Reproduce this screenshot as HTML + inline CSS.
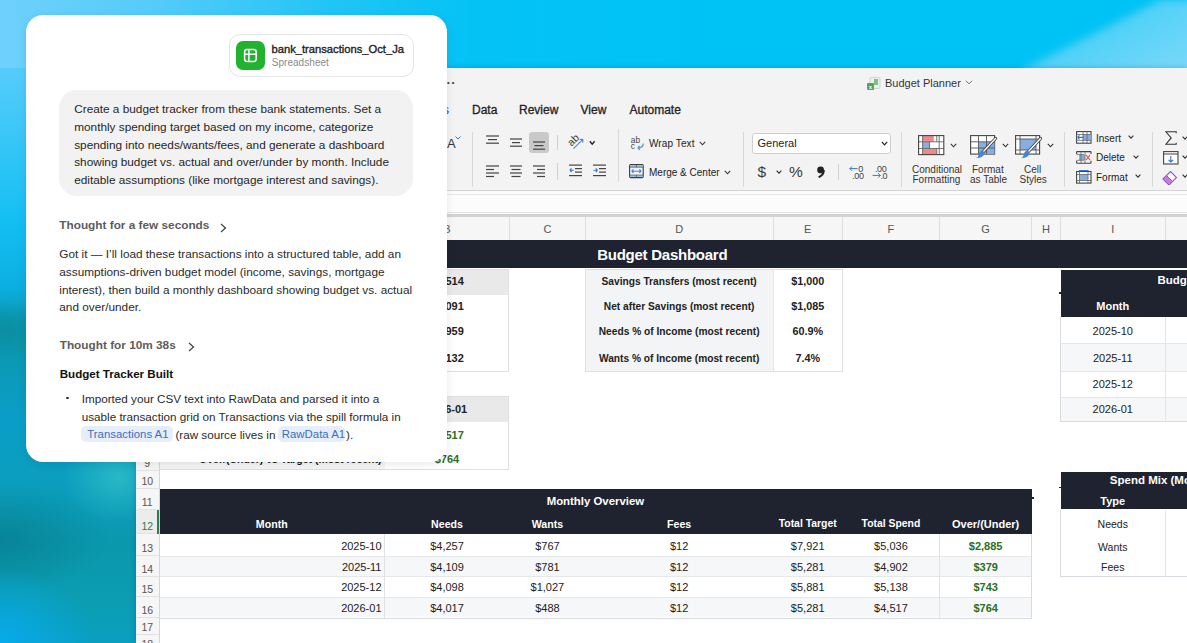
<!DOCTYPE html><html><head><meta charset="utf-8"><style>
*{box-sizing:border-box;margin:0;padding:0}
body{width:1187px;height:643px;overflow:hidden;position:relative;font-family:"Liberation Sans", sans-serif;background:#00c2f5}
.c{position:absolute;display:flex;align-items:center;white-space:nowrap;overflow:visible}
.hd{background:#1f2330;color:#fff;font-weight:bold}
</style></head><body>
<div style="position:absolute;left:0;top:0;width:1187px;height:643px;background:
radial-gradient(ellipse 95px 75px at 0px 643px, rgba(8,170,235,1), rgba(8,170,235,0) 100%),
radial-gradient(ellipse 55px 45px at 118px 478px, rgba(45,188,200,0.85), rgba(45,188,200,0) 100%),
radial-gradient(ellipse 110px 55px at 0px 540px, rgba(8,130,150,0.9), rgba(8,130,150,0) 100%),
radial-gradient(ellipse 60px 30px at 0px 330px, rgba(10,140,158,0.9), rgba(10,140,158,0) 100%),
linear-gradient(180deg,#6ed1fb 0px,#45c9f9 110px,#14bff3 220px,#0cafe2 285px,#0b9cb8 320px,#0b98b2 350px,#0a9ec8 420px,#0b9ec0 470px,#0a98ad 545px,#0b9db2 600px,#0a9fc0 643px)"></div>
<div style="position:absolute;left:0;top:0;width:1187px;height:68px;background:
linear-gradient(90deg,#6ed1fb 0px,#55ccfa 150px,#22c4f6 330px,#05c2f5 470px,#00c3f5 700px,#00c3f5 1187px)"></div>
<div style="position:absolute;left:900px;top:0;width:287px;height:68px;overflow:hidden"><div style="position:absolute;left:0;top:0;width:400px;height:120px;filter:blur(4px)"><div style="position:absolute;left:0;top:0;width:400px;height:120px;clip-path:polygon(23px 120px,261px 0px,400px 0px,400px 120px);background:linear-gradient(153deg,#20c8f7 0%,#3ccdf7 30%,#6fd6f8 60%,#9adff8 100%)"></div></div></div>
<div style="position:absolute;left:136.0px;top:68.0px;width:1051.0px;height:575.0px;background:#f3f3f3;box-shadow:0 0 5px rgba(0,40,70,0.25)"></div>
<svg style="position:absolute;left:866px;top:76px" width="15" height="15" viewBox="0 0 15 15">
<rect x="4" y="1.5" width="10" height="11" rx="1.5" fill="#e9f3ea" stroke="#b9d3bd" stroke-width="0.8"/>
<rect x="8" y="3" width="4" height="6" fill="#7cc17f"/>
<rect x="1" y="7" width="7" height="7" rx="1" fill="#5aa060"/>
<text x="4.5" y="12.6" font-size="6" font-family="Liberation Sans" fill="#fff" text-anchor="middle" font-weight="bold">x</text>
</svg>
<div style="position:absolute;left:885px;top:76.5px;white-space:nowrap;font-size:11px;color:#333">Budget Planner</div>
<svg style="position:absolute;left:965px;top:80px" width="8" height="5" viewBox="0 0 8 5"><path d="M0.8 0.8 L4 3.8 L7.2 0.8" fill="none" stroke="#777" stroke-width="1"/></svg>
<div style="position:absolute;left:446.5px;top:75px;white-space:nowrap;font-size:13px;color:#444;letter-spacing:0.5px;font-weight:bold">··</div>
<div style="position:absolute;left:443px;top:102.5px;white-space:nowrap;font-size:12px;color:#333">s</div>
<div style="position:absolute;left:472px;top:102.5px;white-space:nowrap;font-size:12px;color:#222;-webkit-text-stroke:0.3px #222">Data</div>
<div style="position:absolute;left:519px;top:102.5px;white-space:nowrap;font-size:12px;color:#222;-webkit-text-stroke:0.3px #222">Review</div>
<div style="position:absolute;left:580.5px;top:102.5px;white-space:nowrap;font-size:12px;color:#222;-webkit-text-stroke:0.3px #222">View</div>
<div style="position:absolute;left:629.5px;top:102.5px;white-space:nowrap;font-size:12px;color:#222;-webkit-text-stroke:0.3px #222">Automate</div>
<div style="position:absolute;left:472.0px;top:132.0px;width:1.0px;height:55.0px;background:#d8d8d8"></div>
<div style="position:absolute;left:617.5px;top:129.0px;width:1.0px;height:53.0px;background:#d8d8d8"></div>
<div style="position:absolute;left:742.7px;top:132.0px;width:1.0px;height:55.0px;background:#d8d8d8"></div>
<div style="position:absolute;left:900.7px;top:132.0px;width:1.0px;height:55.0px;background:#d8d8d8"></div>
<div style="position:absolute;left:1064.4px;top:132.0px;width:1.0px;height:55.0px;background:#d8d8d8"></div>
<div style="position:absolute;left:1151.6px;top:132.0px;width:1.0px;height:55.0px;background:#d8d8d8"></div>
<div style="position:absolute;left:557.0px;top:135.0px;width:1.0px;height:15.0px;background:#d0d0d0"></div>
<div style="position:absolute;left:557.0px;top:163.0px;width:1.0px;height:17.0px;background:#d0d0d0"></div>
<div style="position:absolute;left:838.0px;top:164.0px;width:1.0px;height:16.0px;background:#d0d0d0"></div>
<div style="position:absolute;left:447px;top:135.5px;white-space:nowrap;font-size:13px;color:#333">A</div>
<svg style="position:absolute;left:455.3px;top:135.8px" width="6" height="4" viewBox="0 0 6 4"><path d="M0.5 0.5 L3 3 L5.5 0.5" fill="none" stroke="#2b73c6" stroke-width="1"/></svg>
<div style="position:absolute;left:528.7px;top:131.8px;width:20.8px;height:21.7px;background:#c9c9c9;border-radius:3px"></div>
<svg style="position:absolute;left:486px;top:135px" width="13" height="12.8" viewBox="0 0 13 12.8"><rect x="0.0" y="0.4" width="13" height="1.2" fill="#444"/><rect x="2.0" y="3.9999999999999996" width="9" height="1.2" fill="#444"/><rect x="0.0" y="7.6" width="13" height="1.2" fill="#444"/></svg>
<svg style="position:absolute;left:509.8px;top:137.5px" width="12" height="12.8" viewBox="0 0 12 12.8"><rect x="0.0" y="0.4" width="12" height="1.2" fill="#444"/><rect x="2.0" y="3.9999999999999996" width="8" height="1.2" fill="#444"/><rect x="0.0" y="7.6" width="12" height="1.2" fill="#444"/></svg>
<svg style="position:absolute;left:533px;top:140.8px" width="12" height="12.8" viewBox="0 0 12 12.8"><rect x="0.0" y="0.4" width="12" height="1.2" fill="#444"/><rect x="1.5" y="3.9999999999999996" width="9" height="1.2" fill="#444"/><rect x="0.0" y="7.6" width="12" height="1.2" fill="#444"/></svg>
<svg style="position:absolute;left:486px;top:164.6px" width="13" height="16.0" viewBox="0 0 13 16.0"><rect x="0" y="0.4" width="13" height="1.2" fill="#444"/><rect x="0" y="3.9" width="8" height="1.2" fill="#444"/><rect x="0" y="7.4" width="13" height="1.2" fill="#444"/><rect x="0" y="10.9" width="8" height="1.2" fill="#444"/></svg>
<svg style="position:absolute;left:510px;top:164.6px" width="12" height="16.0" viewBox="0 0 12 16.0"><rect x="-0.5" y="0.4" width="13" height="1.2" fill="#444"/><rect x="1.5" y="3.9" width="9" height="1.2" fill="#444"/><rect x="-0.5" y="7.4" width="13" height="1.2" fill="#444"/><rect x="1.5" y="10.9" width="9" height="1.2" fill="#444"/></svg>
<svg style="position:absolute;left:533px;top:164.6px" width="12" height="16.0" viewBox="0 0 12 16.0"><rect x="-1" y="0.4" width="13" height="1.2" fill="#444"/><rect x="4" y="3.9" width="8" height="1.2" fill="#444"/><rect x="-1" y="7.4" width="13" height="1.2" fill="#444"/><rect x="4" y="10.9" width="8" height="1.2" fill="#444"/></svg>
<svg style="position:absolute;left:566px;top:133px" width="20" height="18" viewBox="0 0 20 18">
<text x="6.9" y="6.7" font-size="10.5" font-family="Liberation Sans" fill="#3a3a3a" text-anchor="middle" dominant-baseline="central" transform="rotate(-45 6.9 6.7)">ab</text>
<path d="M7.5 15.7 L16.9 6.3 M16.9 6.3 L13.6 6.5 M16.9 6.3 L16.7 9.6" stroke="#4a86c8" stroke-width="1.1" fill="none"/>
</svg>
<svg style="position:absolute;left:588px;top:139px" width="9" height="8" viewBox="0 0 9 8"><path d="M1.8 2.3 L4.2 5.2 L6.6 2.3" fill="none" stroke="#222" stroke-width="1.4"/></svg>
<svg style="position:absolute;left:569px;top:164px" width="14" height="14" viewBox="0 0 14 14">
<rect x="0" y="0.5" width="13" height="1.2" fill="#444"/><rect x="6" y="4" width="7" height="1.2" fill="#444"/><rect x="6" y="7.5" width="7" height="1.2" fill="#444"/><rect x="0" y="11" width="13" height="1.2" fill="#444"/>
<path d="M0.8 6.2 L4.8 6.2 M0.8 6.2 L2.6 4.4 M0.8 6.2 L2.6 8" stroke="#2f7ad0" stroke-width="1.1" fill="none"/></svg>
<svg style="position:absolute;left:593px;top:164px" width="14" height="14" viewBox="0 0 14 14">
<rect x="0" y="0.5" width="13" height="1.2" fill="#444"/><rect x="6" y="4" width="7" height="1.2" fill="#444"/><rect x="6" y="7.5" width="7" height="1.2" fill="#444"/><rect x="0" y="11" width="13" height="1.2" fill="#444"/>
<path d="M0.5 6.2 L4.6 6.2 M4.6 6.2 L2.8 4.4 M4.6 6.2 L2.8 8" stroke="#2f7ad0" stroke-width="1.1" fill="none"/></svg>
<svg style="position:absolute;left:630px;top:132px" width="16" height="20" viewBox="0 0 16 20">
<text x="0.8" y="10.6" font-size="8.4" font-family="Liberation Sans" fill="#444">ab</text>
<text x="0.8" y="16.9" font-size="8.4" font-family="Liberation Sans" fill="#444">c</text>
<path d="M13.3 11.4 Q13.2 15.6 7.8 16 M7.8 16 L9.6 13.9 M7.8 16 L9.9 17.7" stroke="#4f90d6" stroke-width="1.2" fill="none"/></svg>
<div style="position:absolute;left:649px;top:137.5px;white-space:nowrap;font-size:10px;color:#222;letter-spacing:0.1px">Wrap Text</div>
<svg style="position:absolute;left:698.5px;top:141px" width="7" height="5" viewBox="0 0 7 5"><path d="M0.8 0.8 L3.5 3.8 L6.2 0.8" fill="none" stroke="#333" stroke-width="1.1"/></svg>
<svg style="position:absolute;left:628.5px;top:163.8px" width="15" height="15" viewBox="0 0 15 15">
<rect x="0.6" y="0.6" width="13.6" height="13" rx="1" fill="#eef4fb" stroke="#3c3c3c" stroke-width="1.1"/>
<rect x="1.2" y="1.2" width="12.4" height="1.8" fill="#9cc0e6"/><rect x="1.2" y="11.4" width="12.4" height="1.6" fill="#9cc0e6"/>
<path d="M0.6 3.2 H14.2 M0.6 11.1 H14.2 M7.4 0.6 V3.2 M7.4 11.1 V13.6" stroke="#555" stroke-width="0.8"/>
<path d="M2.6 7.2 L12.2 7.2 M2.6 7.2 L4.5 5.5 M2.6 7.2 L4.5 8.9 M12.2 7.2 L10.3 5.5 M12.2 7.2 L10.3 8.9" stroke="#3f85d0" stroke-width="1.1" fill="none"/></svg>
<div style="position:absolute;left:649px;top:166.5px;white-space:nowrap;font-size:10px;color:#222">Merge &amp; Center</div>
<svg style="position:absolute;left:723.5px;top:169.5px" width="7" height="5" viewBox="0 0 7 5"><path d="M0.8 0.8 L3.5 3.8 L6.2 0.8" fill="none" stroke="#333" stroke-width="1.1"/></svg>
<div style="position:absolute;left:752.4px;top:132.8px;width:138.2px;height:20.8px;background:#fff;border:1px solid #cfcfcf;border-radius:3px"></div>
<div style="position:absolute;left:757.5px;top:136.5px;white-space:nowrap;font-size:11px;color:#222">General</div>
<svg style="position:absolute;left:880.5px;top:141px" width="7" height="5" viewBox="0 0 7 5"><path d="M0.8 0.8 L3.5 3.8 L6.2 0.8" fill="none" stroke="#222" stroke-width="1.2"/></svg>
<div style="position:absolute;left:757.5px;top:162.5px;white-space:nowrap;font-size:15.5px;color:#3a3a3a">$</div>
<svg style="position:absolute;left:775.5px;top:170px" width="6" height="4" viewBox="0 0 6 4"><path d="M0.6 0.6 L3 3.2 L5.4 0.6" fill="none" stroke="#333" stroke-width="1.1"/></svg>
<div style="position:absolute;left:789px;top:162.5px;white-space:nowrap;font-size:15.5px;color:#3a3a3a">%</div>
<svg style="position:absolute;left:815.5px;top:165.8px" width="10" height="12" viewBox="0 0 10 12"><circle cx="4.6" cy="3.9" r="3.4" fill="#222"/><path d="M7.7 4 Q8 9 2.6 11.2" stroke="#222" stroke-width="2.1" fill="none"/></svg>
<svg style="position:absolute;left:849px;top:164px" width="16" height="16" viewBox="0 0 16 16">
<text x="9.2" y="7.6" font-size="9" font-family="Liberation Sans" fill="#444">0</text>
<text x="3.2" y="14.8" font-size="9" font-family="Liberation Sans" fill="#444" letter-spacing="-0.4">.00</text>
<path d="M0.8 4.6 L8.6 4.6 M0.8 4.6 L3 2.4 M0.8 4.6 L3 6.8" stroke="#2f7ad0" stroke-width="1" fill="none"/></svg>
<svg style="position:absolute;left:872px;top:164px" width="16" height="16" viewBox="0 0 16 16">
<text x="3" y="7.6" font-size="9" font-family="Liberation Sans" fill="#444" letter-spacing="-0.4">.00</text>
<text x="8.4" y="14.8" font-size="9" font-family="Liberation Sans" fill="#444" letter-spacing="-0.4">.0</text>
<path d="M0.6 11.4 L8.4 11.4 M8.4 11.4 L6.2 9.2 M8.4 11.4 L6.2 13.6" stroke="#2f7ad0" stroke-width="1" fill="none"/></svg>
<svg style="position:absolute;left:918px;top:134.5px" width="27" height="21" viewBox="0 0 27 21">
<rect x="0.6" y="0.6" width="25.2" height="19" fill="#fff"/>
<rect x="4.6" y="0.6" width="11.2" height="6.2" fill="#ef8a8a"/><rect x="4.6" y="13.5" width="14.1" height="6.1" fill="#ef8a8a"/>
<rect x="4.6" y="6.8" width="6.9" height="6.7" fill="#86aee0"/>
<path d="M4.6 0.6 V19.6 M18.75 0.6 V6.8 M18.75 13.5 V19.6 M21.2 0.6 V19.6 M11.5 6.8 V13.5 M0.6 6.8 H25.8 M0.6 13.5 H25.8" stroke="#666" stroke-width="0.9"/>
<rect x="0.6" y="0.6" width="25.2" height="19" fill="none" stroke="#444" stroke-width="1.1"/></svg>
<svg style="position:absolute;left:950px;top:142.5px" width="7" height="5" viewBox="0 0 7 5"><path d="M0.8 0.8 L3.5 3.8 L6.2 0.8" fill="none" stroke="#333" stroke-width="1.1"/></svg>
<div style="position:absolute;left:912px;top:163.5px;white-space:nowrap;font-size:10px;color:#333;line-height:11px">Conditional</div>
<div style="position:absolute;left:912.5px;top:174px;white-space:nowrap;font-size:10px;color:#333;line-height:11px">Formatting</div>
<svg style="position:absolute;left:970px;top:134.5px" width="28" height="24" viewBox="0 0 28 24">
<rect x="0.6" y="0.6" width="24" height="18.5" fill="#fff" stroke="#444" stroke-width="1.1"/>
<rect x="9" y="7" width="15.5" height="12" fill="#86aee0"/>
<path d="M8.5 0.6 V19 M16.5 0.6 V19 M0.6 6.8 H24.6 M0.6 13 H24.6" stroke="#555" stroke-width="0.9"/>
<path d="M25.5 3.5 L13 17" stroke="#444" stroke-width="3.2" stroke-linecap="round"/>
<path d="M25.5 3.5 L13 17" stroke="#fff" stroke-width="1.4" stroke-linecap="round"/>
<path d="M13.5 16 Q10 15 9 19 Q8.5 22 6 23 Q12 23.5 14.5 19 Z" fill="#3d87d8"/></svg>
<svg style="position:absolute;left:1001.5px;top:142.5px" width="7" height="5" viewBox="0 0 7 5"><path d="M0.8 0.8 L3.5 3.8 L6.2 0.8" fill="none" stroke="#333" stroke-width="1.1"/></svg>
<div style="position:absolute;left:972px;top:163.5px;white-space:nowrap;font-size:10px;color:#333;line-height:11px">Format</div>
<div style="position:absolute;left:970px;top:174px;white-space:nowrap;font-size:10px;color:#333;line-height:11px">as Table</div>
<svg style="position:absolute;left:1015px;top:134.5px" width="28" height="24" viewBox="0 0 28 24">
<rect x="0.6" y="0.6" width="24" height="18.5" fill="#fff" stroke="#444" stroke-width="1.1"/>
<rect x="5" y="4" width="16" height="11" fill="#86aee0"/>
<path d="M5 0.6 V19 M21 0.6 V19 M0.6 4 H24.6 M0.6 15 H24.6" stroke="#555" stroke-width="0.9"/>
<path d="M25.5 3.5 L13 17" stroke="#444" stroke-width="3.2" stroke-linecap="round"/>
<path d="M25.5 3.5 L13 17" stroke="#fff" stroke-width="1.4" stroke-linecap="round"/>
<path d="M13.5 16 Q10 15 9 19 Q8.5 22 6 23 Q12 23.5 14.5 19 Z" fill="#3d87d8"/></svg>
<svg style="position:absolute;left:1046.5px;top:142.5px" width="7" height="5" viewBox="0 0 7 5"><path d="M0.8 0.8 L3.5 3.8 L6.2 0.8" fill="none" stroke="#333" stroke-width="1.1"/></svg>
<div style="position:absolute;left:1024px;top:163.5px;white-space:nowrap;font-size:10px;color:#333;line-height:11px">Cell</div>
<div style="position:absolute;left:1019.5px;top:174px;white-space:nowrap;font-size:10px;color:#333;line-height:11px">Styles</div>
<svg style="position:absolute;left:1076px;top:131px" width="16" height="13" viewBox="0 0 16 13">
<rect x="0.6" y="0.6" width="14.4" height="11.6" fill="#fff" stroke="#444" stroke-width="1.1"/>
<rect x="7" y="3.5" width="8" height="6" fill="#86aee0"/>
<path d="M0.6 3.5 H15 M0.6 9.3 H15 M7 0.6 V12.2 M11 0.6 V12.2" stroke="#666" stroke-width="0.8"/>
<path d="M1.5 6.4 L8 6.4 M1.5 6.4 L3.5 4.4 M1.5 6.4 L3.5 8.4" stroke="#2f7ad0" stroke-width="1.1" fill="none"/></svg>
<div style="position:absolute;left:1096px;top:132.5px;white-space:nowrap;font-size:10px;color:#222">Insert</div>
<svg style="position:absolute;left:1127.5px;top:135px" width="6" height="4" viewBox="0 0 6 4"><path d="M0.6 0.6 L3 3.2 L5.4 0.6" fill="none" stroke="#333" stroke-width="1.1"/></svg>
<svg style="position:absolute;left:1076px;top:150.5px" width="16" height="13" viewBox="0 0 16 13">
<path d="M0.6 0.6 H15 M0.6 12.2 H15 M0.6 0.6 V3 M0.6 9.8 V12.2 M15 0.6 V3 M15 9.8 V12.2" stroke="#444" stroke-width="1.1" fill="none"/>
<rect x="3" y="4" width="6" height="5" fill="#86aee0"/>
<path d="M0.6 3.5 H8 M0.6 9.3 H8 M5 0.6 V12.2 M9 0.6 V12.2" stroke="#666" stroke-width="0.8"/>
<path d="M10 4 L14 9 M14 4 L10 9" stroke="#e0453a" stroke-width="1.1"/></svg>
<div style="position:absolute;left:1096px;top:152px;white-space:nowrap;font-size:10px;color:#222">Delete</div>
<svg style="position:absolute;left:1132.5px;top:154.5px" width="6" height="4" viewBox="0 0 6 4"><path d="M0.6 0.6 L3 3.2 L5.4 0.6" fill="none" stroke="#333" stroke-width="1.1"/></svg>
<svg style="position:absolute;left:1076px;top:170px" width="16" height="14" viewBox="0 0 16 14">
<rect x="0.6" y="1.5" width="14.4" height="11.6" fill="#fff" stroke="#444" stroke-width="1.1"/>
<rect x="3.5" y="4.5" width="8.5" height="6" fill="#86aee0"/>
<path d="M0.6 4.5 H15 M0.6 10.5 H15 M3.5 1.5 V13 M12 1.5 V13" stroke="#666" stroke-width="0.8"/>
<path d="M3 0.5 H12.5" stroke="#2f7ad0" stroke-width="1"/></svg>
<div style="position:absolute;left:1096px;top:172px;white-space:nowrap;font-size:10px;color:#222">Format</div>
<svg style="position:absolute;left:1134.5px;top:174px" width="6" height="4" viewBox="0 0 6 4"><path d="M0.6 0.6 L3 3.2 L5.4 0.6" fill="none" stroke="#333" stroke-width="1.1"/></svg>
<svg style="position:absolute;left:1165px;top:131px" width="12" height="14" viewBox="0 0 12 14"><path d="M11.2 2.2 V0.8 H0.9 L6.2 6.9 L0.9 13.2 H11.2 V11.8" fill="none" stroke="#333" stroke-width="1.1"/></svg>
<svg style="position:absolute;left:1182px;top:136px" width="6" height="4" viewBox="0 0 6 4"><path d="M0.6 0.6 L3 3.2 L5.4 0.6" fill="none" stroke="#333" stroke-width="1.1"/></svg>
<svg style="position:absolute;left:1163px;top:150.5px" width="16" height="14" viewBox="0 0 16 14">
<rect x="0.6" y="0.6" width="14.4" height="12.4" fill="#fff" stroke="#444" stroke-width="1.1"/>
<path d="M0.6 3 H15" stroke="#444" stroke-width="1"/>
<path d="M7.8 5 V11 M7.8 11 L5.5 8.8 M7.8 11 L10.1 8.8" stroke="#2f7ad0" stroke-width="1.1" fill="none"/></svg>
<svg style="position:absolute;left:1182px;top:155px" width="6" height="4" viewBox="0 0 6 4"><path d="M0.6 0.6 L3 3.2 L5.4 0.6" fill="none" stroke="#333" stroke-width="1.1"/></svg>
<svg style="position:absolute;left:1162px;top:169.5px" width="16" height="15" viewBox="0 0 16 15">
<path d="M1 9 L8.5 1.5 L14.5 7.5 L7 15 Z" fill="#fff" stroke="#9b4dca" stroke-width="1.1"/>
<path d="M1 9 L4.5 5.5 L10.5 11.5 L7 15 Z" fill="#c27de0" stroke="#9b4dca" stroke-width="1"/></svg>
<svg style="position:absolute;left:1182px;top:174px" width="6" height="4" viewBox="0 0 6 4"><path d="M0.6 0.6 L3 3.2 L5.4 0.6" fill="none" stroke="#333" stroke-width="1.1"/></svg>
<div style="position:absolute;left:136.0px;top:190.0px;width:1051.0px;height:1.0px;background:#d4d4d4"></div>
<div style="position:absolute;left:136.0px;top:191.0px;width:1051.0px;height:26.0px;background:#fcfcfc"></div>
<div style="position:absolute;left:136.0px;top:194.0px;width:1051.0px;height:1.0px;background:#e6e6e6"></div>
<div style="position:absolute;left:136.0px;top:212.3px;width:1051.0px;height:1.0px;background:#e3e3e3"></div>
<div style="position:absolute;left:136.0px;top:214.3px;width:1051.0px;height:2.7px;background:#d2d2d2"></div>
<div style="position:absolute;left:136.0px;top:217.0px;width:1051.0px;height:23.0px;background:#f6f6f6"></div>
<div style="position:absolute;left:384.0px;top:217.0px;width:1.0px;height:23.0px;background:#dedede"></div>
<div class="c" style="left:159.0px;top:217px;width:225.5px;height:23px;justify-content:center;font-size:11px;color:#555">A</div>
<div style="position:absolute;left:509.0px;top:217.0px;width:1.0px;height:23.0px;background:#dedede"></div>
<div class="c" style="left:384.5px;top:217px;width:125.0px;height:23px;justify-content:center;font-size:11px;color:#555">B</div>
<div style="position:absolute;left:584.8px;top:217.0px;width:1.0px;height:23.0px;background:#dedede"></div>
<div class="c" style="left:509.5px;top:217px;width:75.8px;height:23px;justify-content:center;font-size:11px;color:#555">C</div>
<div style="position:absolute;left:772.5px;top:217.0px;width:1.0px;height:23.0px;background:#dedede"></div>
<div class="c" style="left:585.3px;top:217px;width:187.7px;height:23px;justify-content:center;font-size:11px;color:#555">D</div>
<div style="position:absolute;left:841.9px;top:217.0px;width:1.0px;height:23.0px;background:#dedede"></div>
<div class="c" style="left:773.0px;top:217px;width:69.4px;height:23px;justify-content:center;font-size:11px;color:#555">E</div>
<div style="position:absolute;left:939.0px;top:217.0px;width:1.0px;height:23.0px;background:#dedede"></div>
<div class="c" style="left:842.4px;top:217px;width:97.1px;height:23px;justify-content:center;font-size:11px;color:#555">F</div>
<div style="position:absolute;left:1031.3px;top:217.0px;width:1.0px;height:23.0px;background:#dedede"></div>
<div class="c" style="left:939.5px;top:217px;width:92.3px;height:23px;justify-content:center;font-size:11px;color:#555">G</div>
<div style="position:absolute;left:1059.5px;top:217.0px;width:1.0px;height:23.0px;background:#dedede"></div>
<div class="c" style="left:1031.8px;top:217px;width:28.2px;height:23px;justify-content:center;font-size:11px;color:#555">H</div>
<div style="position:absolute;left:1165.0px;top:217.0px;width:1.0px;height:23.0px;background:#dedede"></div>
<div class="c" style="left:1060.0px;top:217px;width:105.5px;height:23px;justify-content:center;font-size:11px;color:#555">I</div>
<div style="position:absolute;left:1289.5px;top:217.0px;width:1.0px;height:23.0px;background:#dedede"></div>
<div class="c" style="left:1165.5px;top:217px;width:124.5px;height:23px;justify-content:center;font-size:11px;color:#555">J</div>
<div style="position:absolute;left:158.5px;top:217.0px;width:1.0px;height:426.0px;background:#d6d6d6"></div>
<div style="position:absolute;left:136.0px;top:240.0px;width:22.5px;height:403.0px;background:#f6f6f6"></div>
<div style="position:absolute;left:136px;top:240.0px;width:22.5px;height:28.0px;border-bottom:1px solid #e2e2e2"></div>
<div style="position:absolute;left:136px;top:253.9px;width:22.5px;text-align:center;font-size:10.5px;line-height:12px;color:#555">1</div>
<div style="position:absolute;left:136px;top:268.0px;width:22.5px;height:26.5px;border-bottom:1px solid #e2e2e2"></div>
<div style="position:absolute;left:136px;top:280.4px;width:22.5px;text-align:center;font-size:10.5px;line-height:12px;color:#555">2</div>
<div style="position:absolute;left:136px;top:294.5px;width:22.5px;height:23.5px;border-bottom:1px solid #e2e2e2"></div>
<div style="position:absolute;left:136px;top:303.9px;width:22.5px;text-align:center;font-size:10.5px;line-height:12px;color:#555">3</div>
<div style="position:absolute;left:136px;top:318.0px;width:22.5px;height:26.0px;border-bottom:1px solid #e2e2e2"></div>
<div style="position:absolute;left:136px;top:329.9px;width:22.5px;text-align:center;font-size:10.5px;line-height:12px;color:#555">4</div>
<div style="position:absolute;left:136px;top:344.0px;width:22.5px;height:28.0px;border-bottom:1px solid #e2e2e2"></div>
<div style="position:absolute;left:136px;top:357.9px;width:22.5px;text-align:center;font-size:10.5px;line-height:12px;color:#555">5</div>
<div style="position:absolute;left:136px;top:372.0px;width:22.5px;height:24.0px;border-bottom:1px solid #e2e2e2"></div>
<div style="position:absolute;left:136px;top:381.9px;width:22.5px;text-align:center;font-size:10.5px;line-height:12px;color:#555">6</div>
<div style="position:absolute;left:136px;top:396.0px;width:22.5px;height:26.0px;border-bottom:1px solid #e2e2e2"></div>
<div style="position:absolute;left:136px;top:407.9px;width:22.5px;text-align:center;font-size:10.5px;line-height:12px;color:#555">7</div>
<div style="position:absolute;left:136px;top:422.0px;width:22.5px;height:25.0px;border-bottom:1px solid #e2e2e2"></div>
<div style="position:absolute;left:136px;top:432.9px;width:22.5px;text-align:center;font-size:10.5px;line-height:12px;color:#555">8</div>
<div style="position:absolute;left:136px;top:447.0px;width:22.5px;height:23.7px;border-bottom:1px solid #e2e2e2"></div>
<div style="position:absolute;left:136px;top:456.6px;width:22.5px;text-align:center;font-size:10.5px;line-height:12px;color:#555">9</div>
<div style="position:absolute;left:136px;top:470.7px;width:22.5px;height:18.1px;border-bottom:1px solid #e2e2e2"></div>
<div style="position:absolute;left:136px;top:474.7px;width:22.5px;text-align:center;font-size:10.5px;line-height:12px;color:#555">10</div>
<div style="position:absolute;left:136px;top:488.8px;width:22.5px;height:20.8px;border-bottom:1px solid #e2e2e2"></div>
<div style="position:absolute;left:136px;top:495.5px;width:22.5px;text-align:center;font-size:10.5px;line-height:12px;color:#555">11</div>
<div style="position:absolute;left:136px;top:509.6px;width:22.5px;height:24.9px;background:#ececec;border-bottom:1px solid #e2e2e2"></div>
<div style="position:absolute;left:136px;top:520.4px;width:22.5px;text-align:center;font-size:10.5px;line-height:12px;color:#2e7d4f">12</div>
<div style="position:absolute;left:136px;top:534.5px;width:22.5px;height:21.2px;border-bottom:1px solid #e2e2e2"></div>
<div style="position:absolute;left:136px;top:541.6px;width:22.5px;text-align:center;font-size:10.5px;line-height:12px;color:#555">13</div>
<div style="position:absolute;left:136px;top:555.7px;width:22.5px;height:21.1px;border-bottom:1px solid #e2e2e2"></div>
<div style="position:absolute;left:136px;top:562.7px;width:22.5px;text-align:center;font-size:10.5px;line-height:12px;color:#555">14</div>
<div style="position:absolute;left:136px;top:576.8px;width:22.5px;height:20.4px;border-bottom:1px solid #e2e2e2"></div>
<div style="position:absolute;left:136px;top:583.1px;width:22.5px;text-align:center;font-size:10.5px;line-height:12px;color:#555">15</div>
<div style="position:absolute;left:136px;top:597.2px;width:22.5px;height:21.0px;border-bottom:1px solid #e2e2e2"></div>
<div style="position:absolute;left:136px;top:604.1px;width:22.5px;text-align:center;font-size:10.5px;line-height:12px;color:#555">16</div>
<div style="position:absolute;left:136px;top:618.2px;width:22.5px;height:16.6px;border-bottom:1px solid #e2e2e2"></div>
<div style="position:absolute;left:136px;top:620.7px;width:22.5px;text-align:center;font-size:10.5px;line-height:12px;color:#555">17</div>
<div style="position:absolute;left:136px;top:634.8px;width:22.5px;height:17.2px;border-bottom:1px solid #e2e2e2"></div>
<div style="position:absolute;left:136px;top:637.9px;width:22.5px;text-align:center;font-size:10.5px;line-height:12px;color:#555">18</div>
<div style="position:absolute;left:157.0px;top:509.6px;width:2.0px;height:24.9px;background:#2e7d4f"></div>
<div style="position:absolute;left:159.5px;top:240.0px;width:1027.5px;height:403.0px;background:#fff"></div>
<div style="position:absolute;left:159.5px;top:240.0px;width:1027.5px;height:27.5px;background:#1f2330"></div>
<div class="c" style="left:159px;top:240px;width:1006.5px;height:27.5px;justify-content:center;color:#fff;font-weight:bold;font-size:15px;letter-spacing:-0.25px;padding-top:1px">Budget Dashboard</div>
<div style="position:absolute;left:159.5px;top:268.5px;width:349.5px;height:103.5px;background:#fff;border:1px solid #dcdfe4;border-left:none"></div>
<div style="position:absolute;left:159.5px;top:269.5px;width:225.0px;height:101.5px;background:#f3f4f6"></div>
<div style="position:absolute;left:384.5px;top:269.5px;width:123.5px;height:25.0px;background:#e9e9e9"></div>
<div style="position:absolute;left:159.5px;top:396.0px;width:349.5px;height:74.0px;background:#fff;border:1px solid #dcdfe4;border-left:none"></div>
<div style="position:absolute;left:159.5px;top:397.0px;width:225.0px;height:72.0px;background:#f3f4f6"></div>
<div style="position:absolute;left:384.5px;top:397.0px;width:123.5px;height:25.0px;background:#e9e9e9"></div>
<div class="c" style="left:384.5px;top:268.0px;width:125.0px;height:26.5px;justify-content:center;padding:0 3px;font-weight:bold;font-size:11px;color:#222">$4,514</div>
<div class="c" style="left:384.5px;top:294.5px;width:125.0px;height:23.5px;justify-content:center;padding:0 3px;font-weight:bold;font-size:11px;color:#222">$4,091</div>
<div class="c" style="left:384.5px;top:318.0px;width:125.0px;height:26.0px;justify-content:center;padding:0 3px;font-weight:bold;font-size:11px;color:#222">$4,959</div>
<div class="c" style="left:384.5px;top:344.0px;width:125.0px;height:28.0px;justify-content:center;padding:0 3px;font-weight:bold;font-size:11px;color:#222">$4,132</div>
<div class="c" style="left:384.5px;top:396.0px;width:125.0px;height:26.0px;justify-content:center;padding:0 3px;font-weight:bold;font-size:11px;color:#222">2026-01</div>
<div class="c" style="left:384.5px;top:422.0px;width:125.0px;height:25.0px;justify-content:center;padding:0 3px;font-weight:bold;font-size:11px;color:#2a6f22">$4,517</div>
<div class="c" style="left:384.5px;top:447.0px;width:125.0px;height:23.7px;justify-content:center;padding:0 3px;font-weight:bold;font-size:11px;color:#2a6f22">$764</div>
<div class="c" style="left:159.0px;top:447.0px;width:225.5px;height:23.7px;justify-content:flex-end;padding:0 3px;font-weight:bold;font-size:11px;color:#222;font-size:10.5px">Over/(Under) vs Target (most recent)</div>
<div style="position:absolute;left:584.5px;top:268.8px;width:258.2px;height:102.8px;background:#fff;border:1px solid #dcdfe4"></div>
<div style="position:absolute;left:585.5px;top:269.8px;width:187.5px;height:100.8px;background:#f3f4f6"></div>
<div style="position:absolute;left:773.0px;top:269.8px;width:1.0px;height:100.8px;background:#e3e5e9"></div>
<div class="c" style="left:585.3px;top:268.0px;width:187.7px;height:26.5px;justify-content:center;padding:0 3px;font-weight:bold;font-size:10.2px;color:#222">Savings Transfers (most recent)</div>
<div class="c" style="left:585.3px;top:294.5px;width:187.7px;height:23.5px;justify-content:center;padding:0 3px;font-weight:bold;font-size:10.2px;color:#222">Net after Savings (most recent)</div>
<div class="c" style="left:585.3px;top:318.0px;width:187.7px;height:26.0px;justify-content:center;padding:0 3px;font-weight:bold;font-size:10.2px;color:#222">Needs % of Income (most recent)</div>
<div class="c" style="left:585.3px;top:344.0px;width:187.7px;height:28.0px;justify-content:center;padding:0 3px;font-weight:bold;font-size:10.2px;color:#222">Wants % of Income (most recent)</div>
<div class="c" style="left:773.0px;top:268.0px;width:69.4px;height:26.5px;justify-content:center;padding:0 3px;font-weight:bold;font-size:10.2px;color:#222;font-size:10.8px">$1,000</div>
<div class="c" style="left:773.0px;top:294.5px;width:69.4px;height:23.5px;justify-content:center;padding:0 3px;font-weight:bold;font-size:10.2px;color:#222;font-size:10.8px">$1,085</div>
<div class="c" style="left:773.0px;top:318.0px;width:69.4px;height:26.0px;justify-content:center;padding:0 3px;font-weight:bold;font-size:10.2px;color:#222;font-size:10.8px">60.9%</div>
<div class="c" style="left:773.0px;top:344.0px;width:69.4px;height:28.0px;justify-content:center;padding:0 3px;font-weight:bold;font-size:10.2px;color:#222;font-size:10.8px">7.4%</div>
<div style="position:absolute;left:1060.5px;top:269.8px;width:126.5px;height:47.6px;background:#1f2330"></div>
<div style="position:absolute;left:1157.5px;top:274px;color:#fff;font-weight:bold;font-size:11.5px;white-space:nowrap">Budget</div>
<div class="c" style="left:1060.0px;top:294.5px;width:105.5px;height:23.5px;justify-content:center;padding:0 3px;color:#fff;font-weight:bold;font-size:11px;padding-bottom:1px">Month</div>
<div style="position:absolute;left:1060.0px;top:317.4px;width:127.0px;height:104.6px;background:#fff;border-left:1px solid #d8dbe0;border-bottom:1px solid #d8dbe0"></div>
<div style="position:absolute;left:1061.0px;top:343.4px;width:126.0px;height:28.6px;background:#f6f7f9;border-top:1px solid #e3e5e9;border-bottom:1px solid #e3e5e9"></div>
<div style="position:absolute;left:1061.0px;top:397.2px;width:126.0px;height:23.8px;background:#f6f7f9;border-top:1px solid #e3e5e9"></div>
<div style="position:absolute;left:1165.0px;top:317.4px;width:1.0px;height:104.6px;background:#e3e5e9"></div>
<div class="c" style="left:1060.0px;top:318.0px;width:105.5px;height:26.0px;justify-content:center;padding:0 3px;font-size:11px;color:#222">2025-10</div>
<div class="c" style="left:1060.0px;top:344.0px;width:105.5px;height:28.0px;justify-content:center;padding:0 3px;font-size:11px;color:#222">2025-11</div>
<div class="c" style="left:1060.0px;top:372.0px;width:105.5px;height:24.0px;justify-content:center;padding:0 3px;font-size:11px;color:#222">2025-12</div>
<div class="c" style="left:1060.0px;top:396.0px;width:105.5px;height:26.0px;justify-content:center;padding:0 3px;font-size:11px;color:#222">2026-01</div>
<div style="position:absolute;left:1058.5px;top:292.0px;width:2.5px;height:1.5px;background:#222"></div>
<div style="position:absolute;left:1060.5px;top:471.7px;width:126.5px;height:37.8px;background:#1f2330"></div>
<div style="position:absolute;left:1109.8px;top:473.5px;color:#fff;font-weight:bold;font-size:11.5px;white-space:nowrap">Spend Mix (Mo</div>
<div class="c" style="left:1060.0px;top:488.8px;width:105.5px;height:20.8px;justify-content:center;padding:0 3px;color:#fff;font-weight:bold;font-size:11px;padding-top:4.5px">Type</div>
<div style="position:absolute;left:1060.0px;top:509.5px;width:127.0px;height:67.0px;background:#fff;border-left:1px solid #d8dbe0;border-bottom:1px solid #d8dbe0"></div>
<div style="position:absolute;left:1165.0px;top:509.5px;width:1.0px;height:67.0px;background:#e3e5e9"></div>
<div class="c" style="left:1060.0px;top:509.6px;width:105.5px;height:24.9px;justify-content:center;padding:0 3px;font-size:10.5px;color:#222;padding-top:3.5px">Needs</div>
<div class="c" style="left:1060.0px;top:534.5px;width:105.5px;height:21.2px;justify-content:center;padding:0 3px;font-size:10.5px;color:#222;padding-top:3px">Wants</div>
<div class="c" style="left:1060.0px;top:555.7px;width:105.5px;height:21.1px;justify-content:center;padding:0 3px;font-size:10.5px;color:#222;padding-top:2px">Fees</div>
<div style="position:absolute;left:1058.5px;top:486.5px;width:2.5px;height:1.5px;background:#222"></div>
<div style="position:absolute;left:159.5px;top:488.8px;width:872.0px;height:45.2px;background:#1f2330"></div>
<div class="c" style="left:159px;top:491px;width:872.8px;height:19px;justify-content:center;color:#fff;font-weight:bold;font-size:11.4px">Monthly Overview</div>
<div class="c" style="left:159.0px;top:509.6px;width:225.5px;height:24.9px;justify-content:center;padding:0 3px;color:#fff;font-weight:bold;font-size:10.6px;padding-top:3px">Month</div>
<div class="c" style="left:384.5px;top:509.6px;width:125.0px;height:24.9px;justify-content:center;padding:0 3px;color:#fff;font-weight:bold;font-size:10.6px;padding-top:3px">Needs</div>
<div class="c" style="left:509.5px;top:509.6px;width:75.8px;height:24.9px;justify-content:center;padding:0 3px;color:#fff;font-weight:bold;font-size:10.6px;padding-top:3px">Wants</div>
<div class="c" style="left:585.3px;top:509.6px;width:187.7px;height:24.9px;justify-content:center;padding:0 3px;color:#fff;font-weight:bold;font-size:10.6px;padding-top:3px">Fees</div>
<div class="c" style="left:773.0px;top:509.6px;width:69.4px;height:24.9px;justify-content:center;padding:0 3px;color:#fff;font-weight:bold;font-size:10.6px;padding-top:3px;font-size:10.4px">Total Target</div>
<div class="c" style="left:842.4px;top:509.6px;width:97.1px;height:24.9px;justify-content:center;padding:0 3px;color:#fff;font-weight:bold;font-size:10.6px;padding-top:3px;font-size:10.4px">Total Spend</div>
<div class="c" style="left:939.5px;top:509.6px;width:92.3px;height:24.9px;justify-content:center;padding:0 3px;color:#fff;font-weight:bold;font-size:10.6px;padding-top:3px;font-size:11px">Over/(Under)</div>
<div style="position:absolute;left:1031.0px;top:497.0px;width:3.0px;height:1.5px;background:#222"></div>
<div style="position:absolute;left:159.5px;top:534.0px;width:872.3px;height:84.5px;background:#fff;border-bottom:1px solid #d8dbe0;border-right:1px solid #d8dbe0"></div>
<div style="position:absolute;left:159.5px;top:555.7px;width:871.5px;height:21.1px;background:#f6f7f9;border-top:1px solid #e5e7eb;border-bottom:1px solid #e5e7eb"></div>
<div style="position:absolute;left:159.5px;top:597.2px;width:871.5px;height:20.3px;background:#f6f7f9;border-top:1px solid #e5e7eb"></div>
<div style="position:absolute;left:384.0px;top:534.0px;width:1.0px;height:84.0px;background:#dfe2e6"></div>
<div style="position:absolute;left:939.2px;top:534.0px;width:1.0px;height:84.0px;background:#dfe2e6"></div>
<div class="c" style="left:159.0px;top:534.5px;width:225.5px;height:21.2px;justify-content:flex-end;padding:0 3px;font-size:11px;color:#222;padding-top:1px">2025-10</div>
<div class="c" style="left:384.5px;top:534.5px;width:125.0px;height:21.2px;justify-content:center;padding:0 3px;font-size:11px;color:#222;padding-top:1px">$4,257</div>
<div class="c" style="left:509.5px;top:534.5px;width:75.8px;height:21.2px;justify-content:center;padding:0 3px;font-size:11px;color:#222;padding-top:1px">$767</div>
<div class="c" style="left:585.3px;top:534.5px;width:187.7px;height:21.2px;justify-content:center;padding:0 3px;font-size:11px;color:#222;padding-top:1px">$12</div>
<div class="c" style="left:773.0px;top:534.5px;width:69.4px;height:21.2px;justify-content:center;padding:0 3px;font-size:11px;color:#222;padding-top:1px">$7,921</div>
<div class="c" style="left:842.4px;top:534.5px;width:97.1px;height:21.2px;justify-content:center;padding:0 3px;font-size:11px;color:#222;padding-top:1px">$5,036</div>
<div class="c" style="left:939.5px;top:534.5px;width:92.3px;height:21.2px;justify-content:center;padding:0 3px;font-size:11px;font-weight:bold;color:#2a6f22;padding-top:1px">$2,885</div>
<div class="c" style="left:159.0px;top:555.7px;width:225.5px;height:21.1px;justify-content:flex-end;padding:0 3px;font-size:11px;color:#222;padding-top:1px">2025-11</div>
<div class="c" style="left:384.5px;top:555.7px;width:125.0px;height:21.1px;justify-content:center;padding:0 3px;font-size:11px;color:#222;padding-top:1px">$4,109</div>
<div class="c" style="left:509.5px;top:555.7px;width:75.8px;height:21.1px;justify-content:center;padding:0 3px;font-size:11px;color:#222;padding-top:1px">$781</div>
<div class="c" style="left:585.3px;top:555.7px;width:187.7px;height:21.1px;justify-content:center;padding:0 3px;font-size:11px;color:#222;padding-top:1px">$12</div>
<div class="c" style="left:773.0px;top:555.7px;width:69.4px;height:21.1px;justify-content:center;padding:0 3px;font-size:11px;color:#222;padding-top:1px">$5,281</div>
<div class="c" style="left:842.4px;top:555.7px;width:97.1px;height:21.1px;justify-content:center;padding:0 3px;font-size:11px;color:#222;padding-top:1px">$4,902</div>
<div class="c" style="left:939.5px;top:555.7px;width:92.3px;height:21.1px;justify-content:center;padding:0 3px;font-size:11px;font-weight:bold;color:#2a6f22;padding-top:1px">$379</div>
<div class="c" style="left:159.0px;top:576.8px;width:225.5px;height:20.4px;justify-content:flex-end;padding:0 3px;font-size:11px;color:#222;padding-top:1px">2025-12</div>
<div class="c" style="left:384.5px;top:576.8px;width:125.0px;height:20.4px;justify-content:center;padding:0 3px;font-size:11px;color:#222;padding-top:1px">$4,098</div>
<div class="c" style="left:509.5px;top:576.8px;width:75.8px;height:20.4px;justify-content:center;padding:0 3px;font-size:11px;color:#222;padding-top:1px">$1,027</div>
<div class="c" style="left:585.3px;top:576.8px;width:187.7px;height:20.4px;justify-content:center;padding:0 3px;font-size:11px;color:#222;padding-top:1px">$12</div>
<div class="c" style="left:773.0px;top:576.8px;width:69.4px;height:20.4px;justify-content:center;padding:0 3px;font-size:11px;color:#222;padding-top:1px">$5,881</div>
<div class="c" style="left:842.4px;top:576.8px;width:97.1px;height:20.4px;justify-content:center;padding:0 3px;font-size:11px;color:#222;padding-top:1px">$5,138</div>
<div class="c" style="left:939.5px;top:576.8px;width:92.3px;height:20.4px;justify-content:center;padding:0 3px;font-size:11px;font-weight:bold;color:#2a6f22;padding-top:1px">$743</div>
<div class="c" style="left:159.0px;top:597.2px;width:225.5px;height:21.0px;justify-content:flex-end;padding:0 3px;font-size:11px;color:#222;padding-top:1px">2026-01</div>
<div class="c" style="left:384.5px;top:597.2px;width:125.0px;height:21.0px;justify-content:center;padding:0 3px;font-size:11px;color:#222;padding-top:1px">$4,017</div>
<div class="c" style="left:509.5px;top:597.2px;width:75.8px;height:21.0px;justify-content:center;padding:0 3px;font-size:11px;color:#222;padding-top:1px">$488</div>
<div class="c" style="left:585.3px;top:597.2px;width:187.7px;height:21.0px;justify-content:center;padding:0 3px;font-size:11px;color:#222;padding-top:1px">$12</div>
<div class="c" style="left:773.0px;top:597.2px;width:69.4px;height:21.0px;justify-content:center;padding:0 3px;font-size:11px;color:#222;padding-top:1px">$5,281</div>
<div class="c" style="left:842.4px;top:597.2px;width:97.1px;height:21.0px;justify-content:center;padding:0 3px;font-size:11px;color:#222;padding-top:1px">$4,517</div>
<div class="c" style="left:939.5px;top:597.2px;width:92.3px;height:21.0px;justify-content:center;padding:0 3px;font-size:11px;font-weight:bold;color:#2a6f22;padding-top:1px">$764</div>
<div style="position:absolute;left:26px;top:15px;width:421px;height:447px;background:#fff;border-radius:17px;box-shadow:0 2px 10px rgba(0,0,0,0.09)"></div>
<div style="position:absolute;left:228.5px;top:33.5px;width:185.2px;height:43.2px;border:1px solid #e6e6e6;border-radius:11px;background:#fff"></div>
<div style="position:absolute;left:235.6px;top:40.6px;width:29.5px;height:29.5px;background:#1fb32f;border-radius:7px"></div>
<svg style="position:absolute;left:242px;top:47px" width="17" height="17" viewBox="0 0 17 17">
<rect x="2.6" y="2.6" width="11.6" height="11.8" rx="2.4" fill="none" stroke="#fff" stroke-width="1.5"/>
<path d="M2.6 7.2 H14.2 M6.9 2.6 V14.4" stroke="#fff" stroke-width="1.5"/></svg>
<div style="position:absolute;left:271.5px;top:42.5px;white-space:nowrap;font-size:11.2px;color:#222;-webkit-text-stroke:0.35px #222;letter-spacing:0px">bank_transactions_Oct_Ja</div>
<div style="position:absolute;left:271.7px;top:56.5px;white-space:nowrap;font-size:10px;color:#8a8a8a;letter-spacing:0.05px">Spreadsheet</div>
<div style="position:absolute;left:58.6px;top:90.0px;width:354.0px;height:106.0px;background:#f2f2f2;border-radius:18px"></div>
<div style="position:absolute;left:74.2px;top:101px;width:340px;font-size:11.8px;line-height:17.8px;color:#262626">Create a budget tracker from these bank statements. Set a<br>monthly spending target based on my income, categorize<br>spending into needs/wants/fees, and generate a dashboard<br>showing budget vs. actual and over/under by month. Include<br>editable assumptions (like mortgage interest and savings).</div>
<div style="position:absolute;left:59.3px;top:218.3px;white-space:nowrap;font-size:11.8px;color:#5c5c5c;font-weight:bold">Thought for a few seconds</div>
<svg style="position:absolute;left:220px;top:222.5px" width="7" height="10" viewBox="0 0 7 10"><path d="M1 1 L5.5 5 L1 9" fill="none" stroke="#444" stroke-width="1.3"/></svg>
<div style="position:absolute;left:59.3px;top:246px;width:380px;font-size:11.8px;line-height:17.8px;color:#2a2a2a">Got it — I’ll load these transactions into a structured table, add an<br>assumptions-driven budget model (income, savings, mortgage<br>interest), then build a monthly dashboard showing budget vs. actual<br>and over/under.</div>
<div style="position:absolute;left:59.7px;top:338.3px;white-space:nowrap;font-size:11.8px;color:#5c5c5c;font-weight:bold">Thought for 10m 38s</div>
<svg style="position:absolute;left:187.5px;top:342px" width="7" height="10" viewBox="0 0 7 10"><path d="M1 1 L5.5 5 L1 9" fill="none" stroke="#444" stroke-width="1.3"/></svg>
<div style="position:absolute;left:59.7px;top:366.8px;white-space:nowrap;font-size:11.6px;color:#111;font-weight:bold">Budget Tracker Built</div>
<div style="position:absolute;left:66.0px;top:396.5px;width:2.6px;height:2.6px;background:#333;border-radius:50%"></div>
<div style="position:absolute;left:81.3px;top:426.0px;width:91.8px;height:16.0px;background:#e6eefa;border-radius:5px"></div>
<div style="position:absolute;left:277.9px;top:426.0px;width:67.4px;height:16.0px;background:#e6eefa;border-radius:5px"></div>
<div style="position:absolute;left:81.7px;top:390.1px;width:360px;font-size:11.7px;line-height:17.8px;color:#2a2a2a;white-space:nowrap">Imported your CSV text into RawData and parsed it into a<br>usable transaction grid on Transactions via the spill formula in</div>
<div style="position:absolute;left:87.3px;top:425.9px;white-space:nowrap;font-size:11.4px;line-height:17.8px;color:#3b6fc0">Transactions A1</div>
<div style="position:absolute;left:175.4px;top:425.9px;white-space:nowrap;font-size:11.7px;line-height:17.8px;color:#2a2a2a">(raw source lives in</div>
<div style="position:absolute;left:281.8px;top:425.9px;white-space:nowrap;font-size:11.4px;line-height:17.8px;color:#3b6fc0">RawData A1</div>
<div style="position:absolute;left:346px;top:425.9px;white-space:nowrap;font-size:11.7px;line-height:17.8px;color:#2a2a2a">).</div>
</body></html>
